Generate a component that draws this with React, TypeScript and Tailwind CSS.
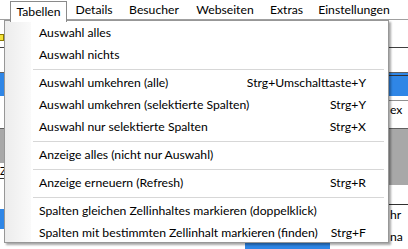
const items: ({ label: string; key?: string } | null)[] = [
  { label: "Auswahl alles" },
  { label: "Auswahl nichts" },
  null,
  { label: "Auswahl umkehren (alle)", key: "Strg+Umschalttaste+Y" },
  { label: "Auswahl umkehren (selektierte Spalten)", key: "Strg+Y" },
  { label: "Auswahl nur selektierte Spalten", key: "Strg+X" },
  null,
  { label: "Anzeige alles (nicht nur Auswahl)" },
  null,
  { label: "Anzeige erneuern (Refresh)", key: "Strg+R" },
  null,
  { label: "Spalten gleichen Zellinhaltes markieren (doppelklick)" },
  { label: "Spalten mit bestimmten Zellinhalt markieren (finden)", key: "Strg+F" },
];

const menus = [
  { label: "Tabellen", w: "w-[57px]" },
  { label: "Details", w: "w-[54px]" },
  { label: "Besucher", w: "w-[66px]" },
  { label: "Webseiten", w: "w-[76px]" },
  { label: "Extras", w: "w-[47px]" },
  { label: "Einstellungen", w: "w-[88px]" },
];

export default function App() {
  return (
    <div className="relative w-[408px] h-[249px] overflow-hidden bg-white text-[12.2px] text-black font-['Lato',sans-serif]">
      {/* menu bar */}
      <div className="flex h-[20px] pl-[10px] border-b border-[#a0a0a0] bg-white">
        {menus.map((m, i) => (
          <div
            key={m.label}
            className={`${m.w} h-[20px] flex items-center justify-center leading-none ${
              i === 0 ? "border border-b-0 border-[#8a8a8a] bg-white relative z-20 h-[21px] mt-[1px]" : ""
            }`}
          >
            {m.label}
          </div>
        ))}
      </div>

      {/* table behind the menu */}
      <div className="flex flex-col">
        <div className="h-[28px] border-b border-[#404040] flex items-start">
          <div className="mt-[14px] ml-[-2px] w-[6px] h-[7px] bg-[#f5e23a] border border-[#8a7a00]" />
        </div>
        <div className="h-[25px] border-b border-[#606060]" />
        <div className="h-[23px] bg-[#2f86e6]" />
        <div className="h-[33px] border-b border-[#606060]" />
        <div className="h-[34px] bg-[#a8a8a8]" />
        <div className="h-[16px] border-b border-[#303030] text-[11px] leading-[16px]">Z</div>
        <div className="h-[30px]" />
        <div className="h-[20px] bg-[#2f86e6] w-[22px]" />
      </div>

      {/* right side column fragments */}
      <div className="absolute left-[389px] top-[21px] w-[19px] h-[228px] flex flex-col leading-none">
        <div className="h-[54px]" />
        <div className="h-[1px] bg-[#303030]" />
        <div className="h-[25px] border-b border-[#909090]" />
        <div className="h-[20px] pt-[3px] pl-[1px]">ex</div>
        <div className="h-[42px]" />
        <div className="h-[22px] bg-[#a8a8a8]" />
        <div className="h-[20px] border-b border-[#303030]" />
        <div className="h-[22px] pt-[4px] pl-[1px]">hr</div>
        <div className="h-[22px] pt-[4px] pl-[1px]">na</div>
      </div>
      <div className="absolute left-[245px] top-[243px] w-[85px] h-[6px] bg-[#2f86e6]" />

      {/* dropdown */}
      <div className="absolute left-[4px] top-[20px] w-[385px] h-[223px] bg-white border border-[#979797] shadow-[2px_2px_2px_rgba(0,0,0,0.35)] z-10 flex">
        <div className="w-[26px] shrink-0 bg-gradient-to-r from-[#ececec] to-[#fafafa]" />
        <div className="flex-1 pt-[1px] pr-[4px]">
          {items.map((it, i) =>
            it ? (
              <div key={i} className="h-[22px] flex items-center pl-[8px] pr-[18px] whitespace-nowrap">
                <span className="flex-1">{it.label}</span>
                {it.key && <span>{it.key}</span>}
              </div>
            ) : (
              <div key={i} className="h-[6px] flex items-center pl-[2px]">
                <div className="h-[1px] w-full bg-[#d7d7d7]" />
              </div>
            )
          )}
        </div>
      </div>
    </div>
  );
}
